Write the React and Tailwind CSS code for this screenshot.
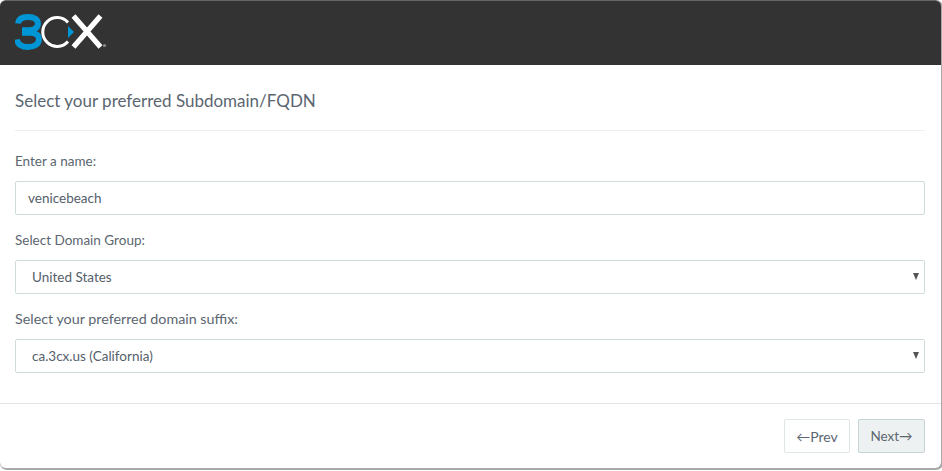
import React from 'react';

const Logo = () => (
  <svg width="96" height="38" viewBox="0 0 96 38" className="block">
    {/* 3 */}
    <path d="M3 9.5 C3.5 5 7.5 3 13 3 C19.5 3 23 5.5 23 9.8 C23 13.5 20 15.5 15.5 16.3 L10 16.3 L10 18.8 L15.5 18.8 C21 19.2 24 21 24 25 C24 30 19.5 33 13 33 C6.5 33 2.5 30 1.8 25.5" fill="none" stroke="#0096d6" strokeWidth="6" />
    {/* C */}
    <path d="M53 8.5 A14.4 14.4 0 1 0 53 27.5" fill="none" stroke="#fff" strokeWidth="3" />
    <path d="M53 12 L59 18 L53 24 Z" fill="#0096d6" />
    {/* X */}
    <path d="M58.5 2 L85.5 33 M85.5 2 L58.5 33" fill="none" stroke="#fff" strokeWidth="5.2" />
    <circle cx="89.5" cy="31.5" r="1.6" fill="#8a8a8a" />
  </svg>
);

const Label = ({ children, size = 'text-[13.5px]' }) => (
  <label className={`block ${size} leading-5 text-[#5b6670]`}>{children}</label>
);

const Select = ({ value }) => (
  <div className="relative h-[34px]">
    <select
      defaultValue={value}
      className="block h-full w-full appearance-none rounded-[2px] border border-[#cfdcdc] bg-white pl-4 text-[13.5px] text-[#55606a] outline-none"
    >
      <option>{value}</option>
    </select>
    <span className="pointer-events-none absolute right-[6px] top-[13px] h-0 w-0 border-x-[3.5px] border-t-[7px] border-x-transparent border-t-[#555]" />
  </div>
);

export default function App() {
  return (
    <div className="h-[471px] w-[942px] overflow-hidden bg-white font-['Lato',sans-serif]">
      <div className="h-[468px] w-[941px] rounded-md bg-white shadow-[1px_1px_0_1px_#a9a9a9]">
        <header className="flex h-[65px] items-center rounded-t-md border-t border-[#666] bg-[#333333] pl-[15px]">
          <Logo />
        </header>

        <div className="pl-[15px] pr-[16px]">
          <div className="flex h-[66px] items-center border-b border-[#eceeef] pt-[7px]">
            <h1 className="text-[17px] font-normal text-[#5b6670]">Select your preferred Subdomain/FQDN</h1>
          </div>

          <div className="pt-[20px]">
            <Label>Enter a name:</Label>
            <input
              defaultValue="venicebeach"
              className="mt-[10px] block h-[34px] w-full rounded-[2px] border border-[#cfdcdc] bg-white px-3 text-[13.5px] text-[#55606a] outline-none"
            />
          </div>
          <div className="pt-[15px]">
            <Label>Select Domain Group:</Label>
            <div className="mt-[10px]"><Select value="United States" /></div>
          </div>
          <div className="pt-[15px]">
            <Label size="text-[14.3px]">Select your preferred domain suffix:</Label>
            <div className="mt-[10px]"><Select value="ca.3cx.us (California)" /></div>
          </div>
        </div>

        <footer className="mt-[30px] flex h-[64px] items-start justify-end gap-2 border-t border-[#e2e5e6] pr-[16px] pt-[15px]">
          <button className="h-[34px] w-[66px] rounded-[2px] border border-[#dfe6e8] bg-white text-[14px] text-[#5b6670]">←Prev</button>
          <button className="h-[34px] w-[67px] rounded-[2px] border border-[#c5d2d6] bg-[#edf1f2] text-[13.5px] text-[#5b6670]">Next→</button>
        </footer>
      </div>
    </div>
  );
}
